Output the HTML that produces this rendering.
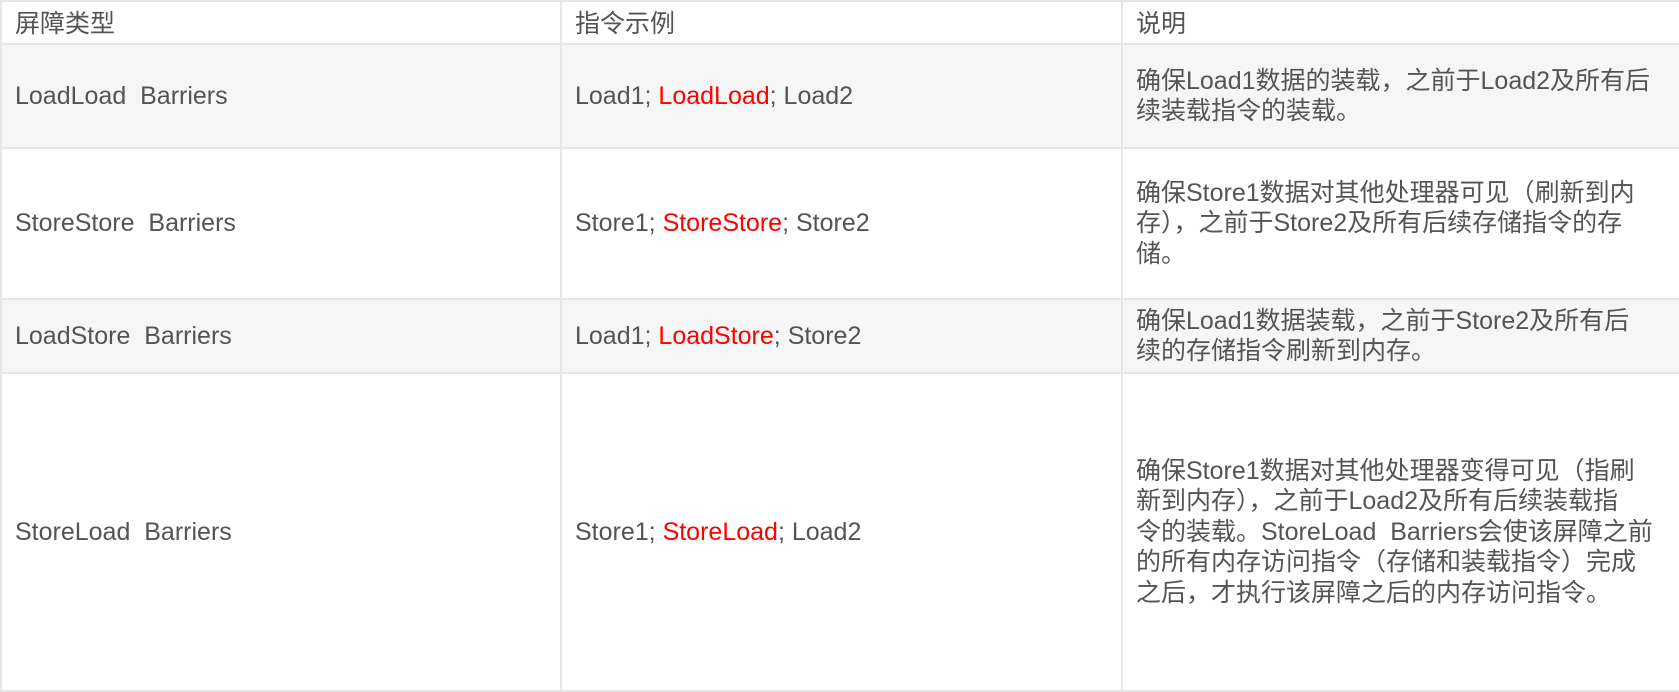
<!DOCTYPE html>
<html><head><meta charset="utf-8">
<style>
html,body{margin:0;padding:0;background:#fff;}
body{width:1679px;height:691px;overflow:hidden;}
table{border-collapse:collapse;table-layout:fixed;width:1679px;margin-top:0;}
td{border:2px solid #e6e6e6;padding:0 13px;vertical-align:middle;
font-family:"Liberation Sans","Noto Sans CJK SC",sans-serif;font-size:25px;line-height:30.5px;color:#545454;white-space:nowrap;overflow:hidden;}
tr.h td{padding-top:4px;}
tr.g td{background:#f6f6f6;}
.r{color:#f00;}
</style></head><body>
<table>
<colgroup><col style="width:560px"><col style="width:561px"><col style="width:558px"></colgroup>
<tr class="h" style="height:43px"><td>屏障类型</td><td>指令示例</td><td>说明</td></tr>
<tr class="g" style="height:104px"><td>LoadLoad&nbsp; Barriers</td><td>Load1; <span class="r">LoadLoad</span>; Load2</td><td>确保Load1数据的装载，之前于Load2及所有后<br>续装载指令的装载。</td></tr>
<tr style="height:151px"><td>StoreStore&nbsp; Barriers</td><td>Store1; <span class="r">StoreStore</span>; Store2</td><td>确保Store1数据对其他处理器可见（刷新到内<br>存），之前于Store2及所有后续存储指令的存<br>储。</td></tr>
<tr class="g" style="height:74px"><td>LoadStore&nbsp; Barriers</td><td>Load1; <span class="r">LoadStore</span>; Store2</td><td>确保Load1数据装载，之前于Store2及所有后<br>续的存储指令刷新到内存。</td></tr>
<tr style="height:318px"><td>StoreLoad&nbsp; Barriers</td><td>Store1; <span class="r">StoreLoad</span>; Load2</td><td>确保Store1数据对其他处理器变得可见（指刷<br>新到内存），之前于Load2及所有后续装载指<br>令的装载。StoreLoad&nbsp; Barriers会使该屏障之前<br>的所有内存访问指令（存储和装载指令）完成<br>之后，才执行该屏障之后的内存访问指令。</td></tr>
</table>
</body></html>
